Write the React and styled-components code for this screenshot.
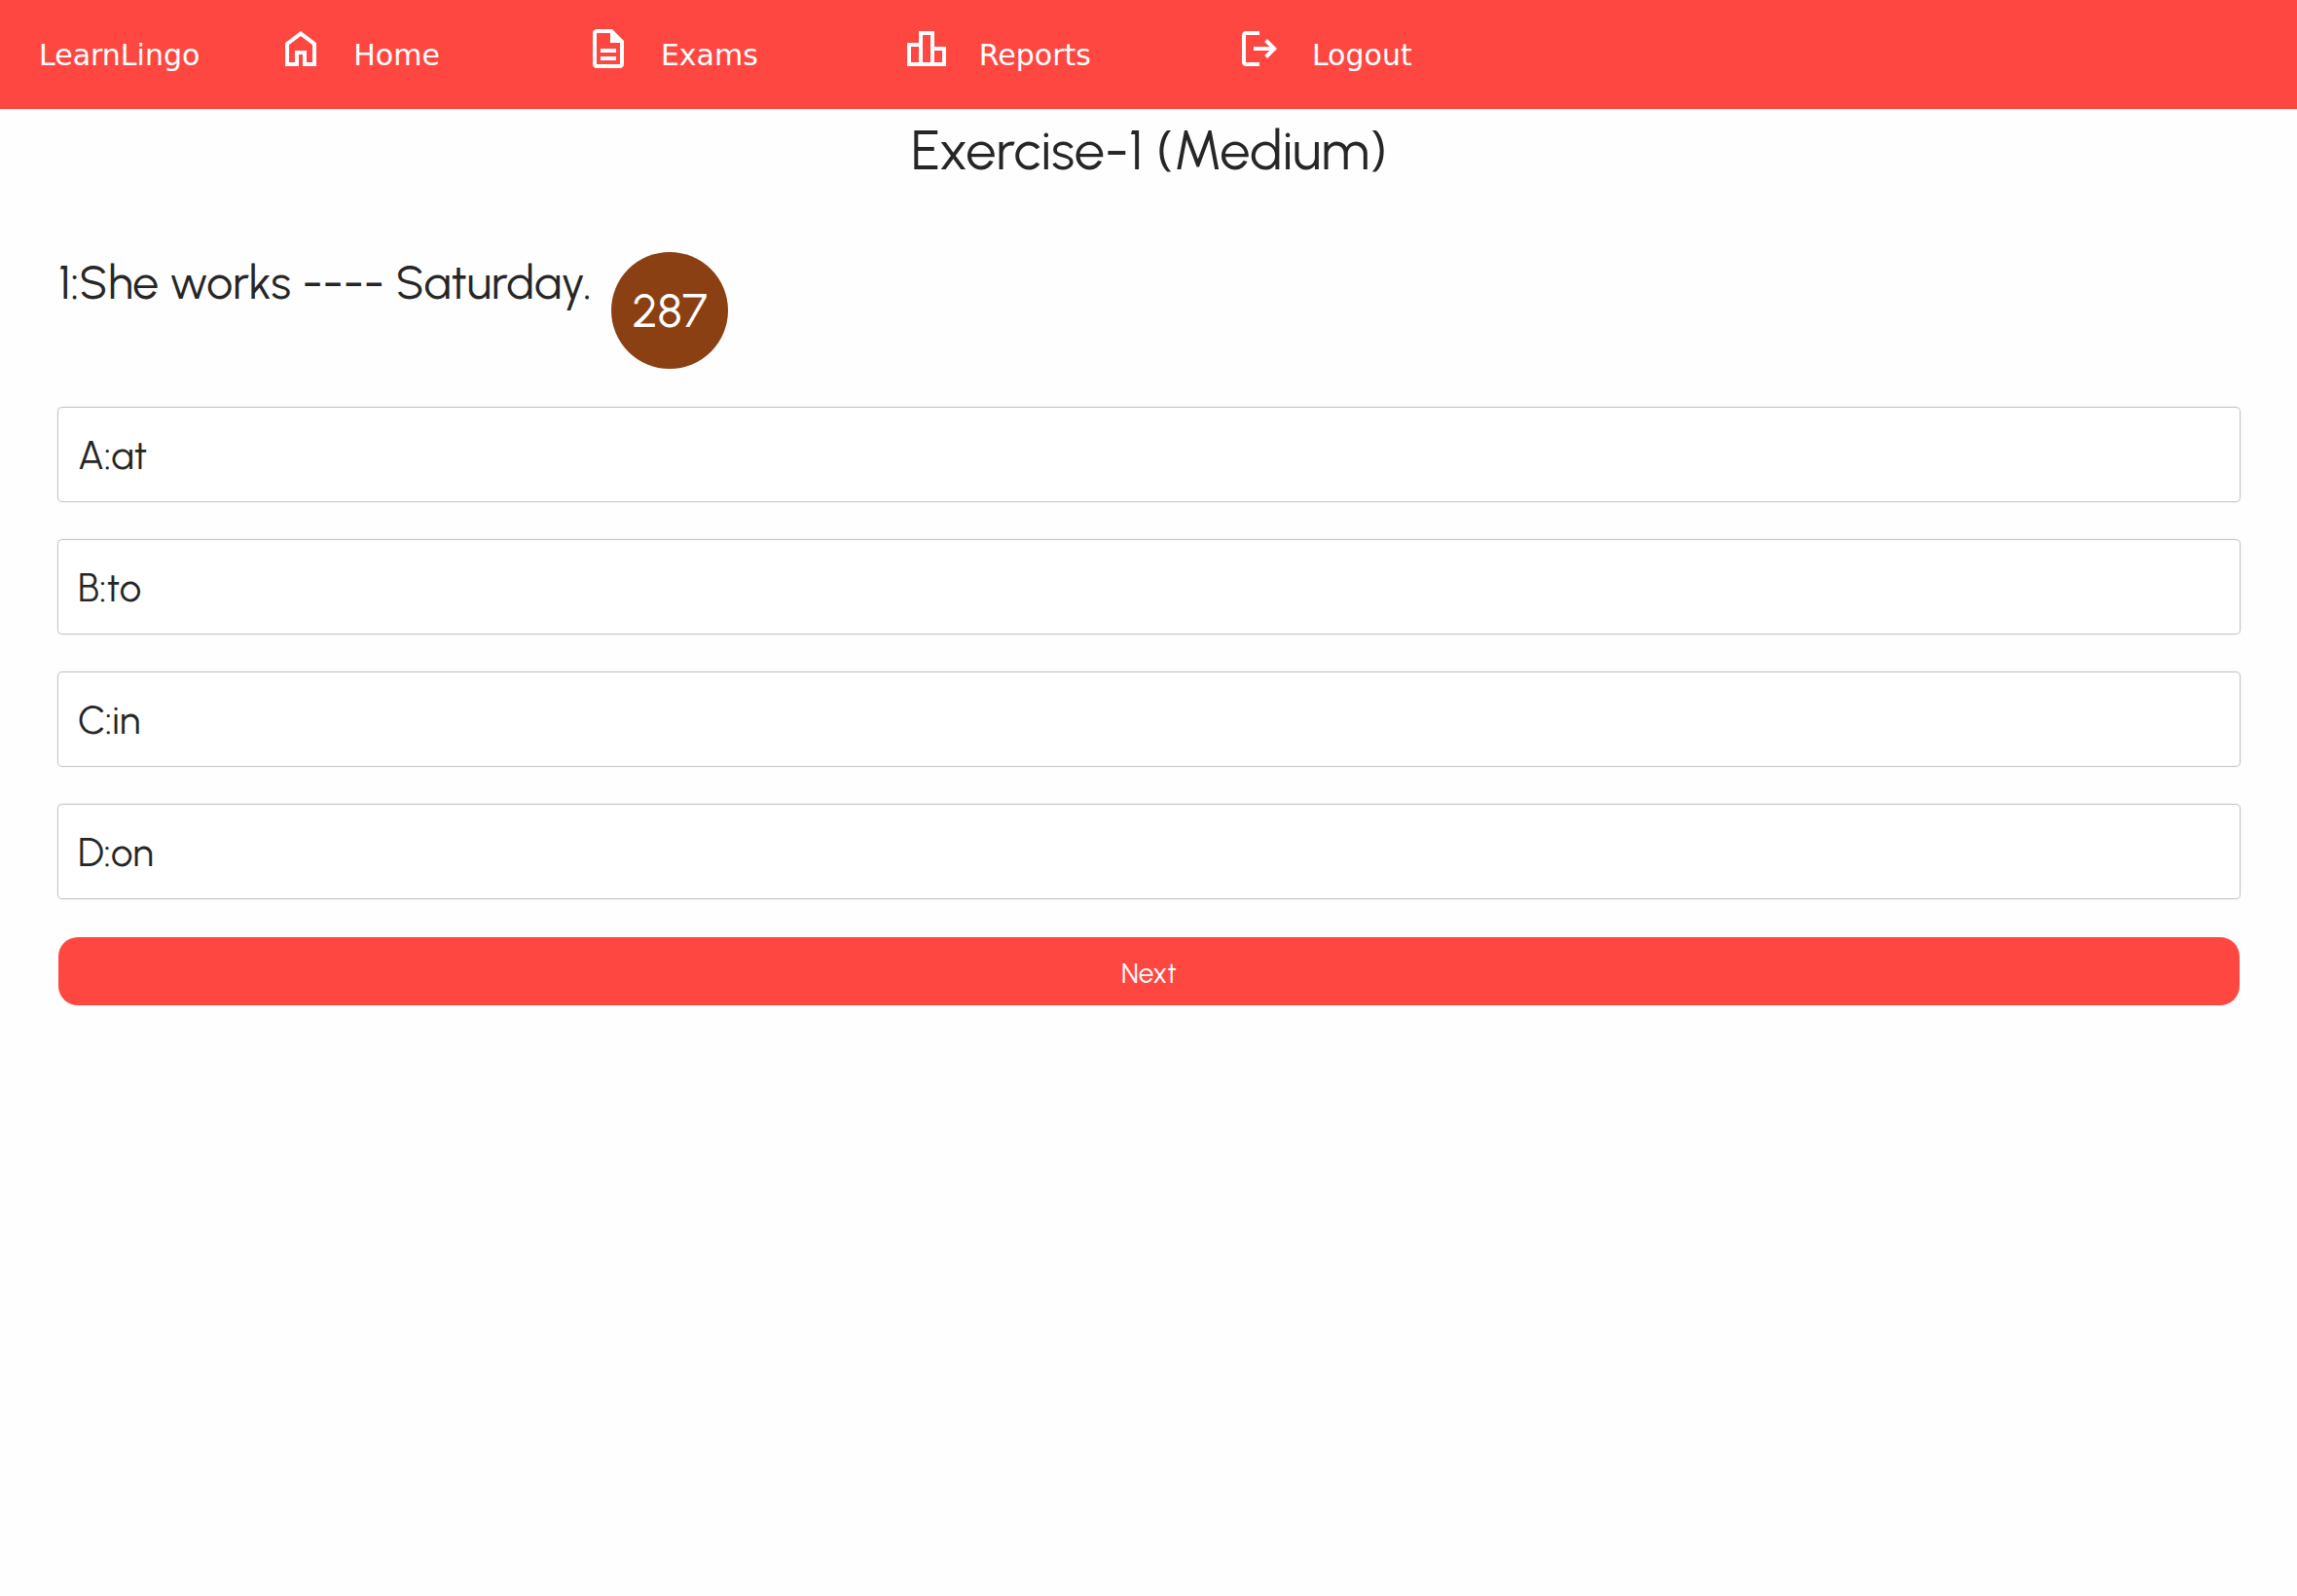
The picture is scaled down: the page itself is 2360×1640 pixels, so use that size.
import React, { useState } from "react";
import styled, { createGlobalStyle } from "styled-components";

const GlobalStyle = createGlobalStyle`
  *, *::before, *::after { box-sizing: border-box; }
  body { margin: 0; background: #fefefe; color: #262626; font-family: Urbanist, Lato, sans-serif; }
`;

const Header = styled.header`
  display: flex;
  align-items: center;
  height: 112px;
  padding: 2px 40px 0;
  background: #ff4742;
  font-family: "DejaVu Sans", sans-serif;
  font-size: 30px;
  line-height: 36px;
  color: #fff;
`;

const NavLink = styled.a`
  display: flex;
  align-items: center;
  gap: 30px;
  color: inherit;
  text-decoration: none;
`;

const Brand = styled(NavLink)`
  margin-right: 80px;
`;

const Nav = styled.nav`
  display: flex;
  gap: 149px;
`;

const Icon = styled.svg`
  width: 48px;
  height: 48px;
  margin-bottom: 14px;
  fill: currentColor;
`;

const Main = styled.main`
  padding: 12px 59px 40px 60px;
`;

const Title = styled.h1`
  margin: 0;
  font-size: 56px;
  line-height: 62px;
  font-weight: 400;
  text-align: center;
`;

const QuestionRow = styled.div`
  display: flex;
  align-items: flex-start;
  gap: 20px;
  margin-top: 73px;
`;

const Question = styled.h2`
  margin: 0;
  font-size: 48px;
  line-height: 62px;
  font-weight: 400;
`;

const Timer = styled.div`
  display: grid;
  place-items: center;
  width: 120px;
  height: 120px;
  border-radius: 50%;
  background: #8b4013;
  color: #fff;
  font-size: 48px;
`;

const Options = styled.div`
  display: grid;
  gap: 40px;
  margin: 40px 0;
`;

const Option = styled.button`
  height: 96px;
  padding: 2px 20px 0;
  border: 0;
  border-radius: 4px;
  background: #fff;
  box-shadow: 0 0 0 1px rgba(0, 0, 0, 0.16), 0 0 3px rgba(0, 0, 0, 0.22);
  color: inherit;
  font: 400 40px/48px Urbanist, Lato, sans-serif;
  text-align: left;
`;

const NextButton = styled.button`
  display: block;
  width: 100%;
  height: 70px;
  padding: 4px 20px 0;
  border: 0;
  border-radius: 20px;
  background: #ff4742;
  color: #fff;
  font: 400 28px/36px Urbanist, Lato, sans-serif;
`;

const links = [
  { label: "Home", path: "M6 19h3v-6h6v6h3v-9l-6-4.500L6 10v9zm-2 2V9l8-6 8 6v12h-7v-6h-2v6H4z" },
  { label: "Exams", path: "M8 18h8v-2H8v2zm0-4h8v-2H8v2zm-2 8c-1.100 0-2-.9-2-2V4c0-1.100.9-2 2-2h8l6 6v12c0 1.100-.9 2-2 2H6zm7-13V4H6v16h12V9h-5z" },
  { label: "Reports", path: "M4 19h4v-8H4v8zm6 0h4V5h-4v14zm6 0h4v-6h-4v6zM2 21V9h6V3h8v8h6v10H2z" },
  { label: "Logout", path: "M5 21c-1.100 0-2-.9-2-2V5c0-1.100.9-2 2-2h7v2H5v14h7v2H5zm11-4-1.375-1.450L17.175 13H9v-2h8.175l-2.550-2.550L16 7l5 5-5 5z" },
];

const options = ["A:at", "B:to", "C:in", "D:on"];

export default function App() {
  const [selected, setSelected] = useState(null);
  return (
    <>
      <GlobalStyle />
      <Header>
        <Brand href="#">LearnLingo</Brand>
        <Nav>
          {links.map(({ label, path }) => (
            <NavLink key={label} href={`#${label.toLowerCase()}`}>
              <Icon viewBox="0 0 24 24" aria-hidden="true"><path d={path} /></Icon>
              {label}
            </NavLink>
          ))}
        </Nav>
      </Header>
      <Main>
        <Title>Exercise-1 (Medium)</Title>
        <QuestionRow>
          <Question>1:She works ---- Saturday.</Question>
          <Timer>287</Timer>
        </QuestionRow>
        <Options>
          {options.map((text) => (
            <Option key={text} type="button" aria-pressed={selected === text} onClick={() => setSelected(text)}>
              {text}
            </Option>
          ))}
        </Options>
        <NextButton type="button">Next</NextButton>
      </Main>
    </>
  );
}
